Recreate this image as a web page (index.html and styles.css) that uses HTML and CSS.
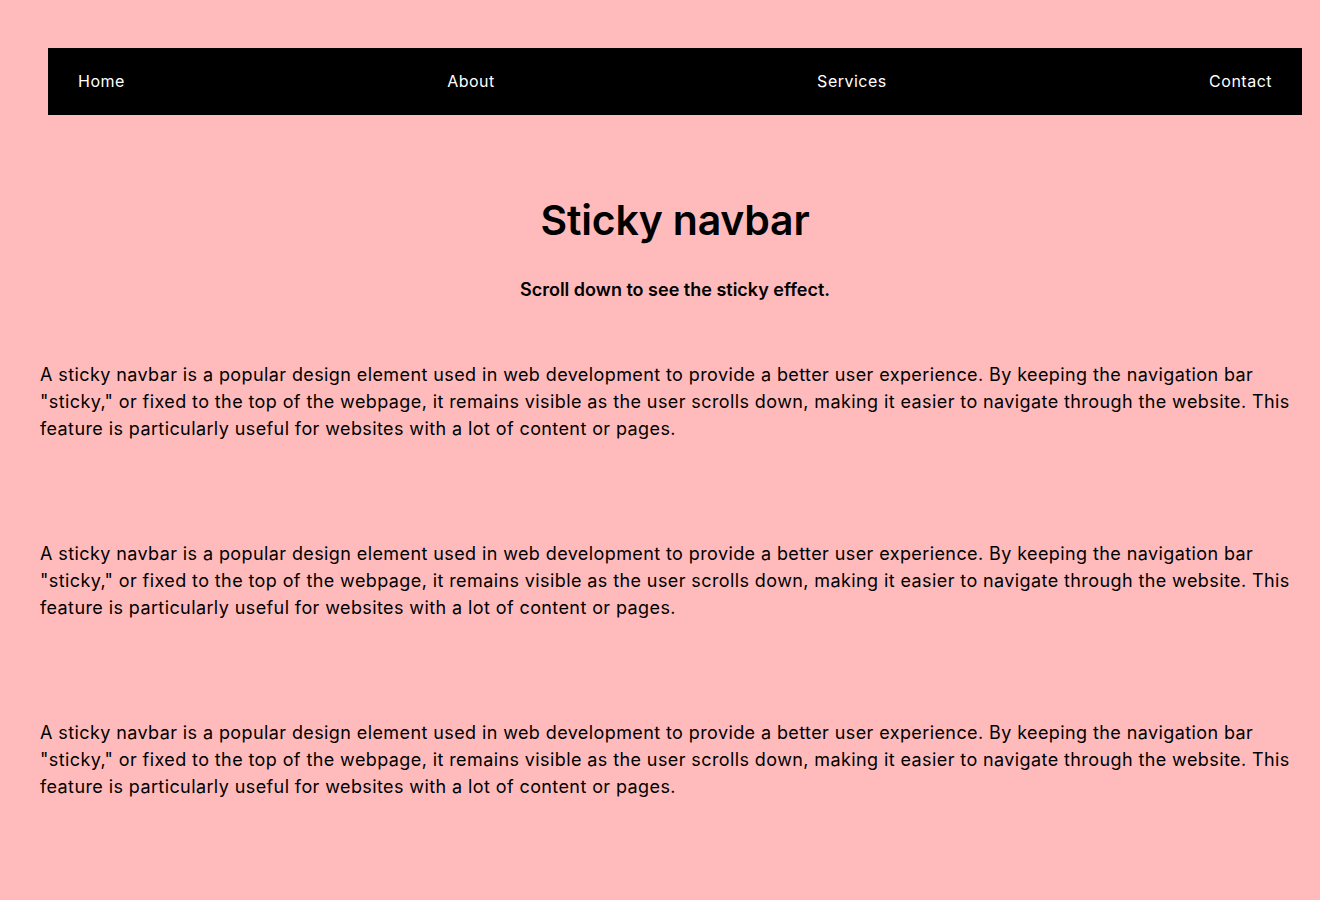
FILE: index.html
```html
<!DOCTYPE html>
<html lang="en">
<head>
<meta charset="utf-8">
<title>Sticky navbar</title>
<link rel="stylesheet" href="styles.css">
</head>
<body>
<nav class="navbar">
  <a class="nav-link" href="#">Home</a>
  <a class="nav-link" href="#">About</a>
  <a class="nav-link" href="#">Services</a>
  <a class="nav-link" href="#">Contact</a>
</nav>
<main class="content">
  <h1 class="title">Sticky navbar</h1>
  <p class="subtitle">Scroll down to see the sticky effect.</p>
  <p class="text">A sticky navbar is a popular design element used in web development to provide a better user experience. By keeping the navigation bar "sticky," or fixed to the top of the webpage, it remains visible as the user scrolls down, making it easier to navigate through the website. This feature is particularly useful for websites with a lot of content or pages.</p>
  <p class="text">A sticky navbar is a popular design element used in web development to provide a better user experience. By keeping the navigation bar "sticky," or fixed to the top of the webpage, it remains visible as the user scrolls down, making it easier to navigate through the website. This feature is particularly useful for websites with a lot of content or pages.</p>
  <p class="text">A sticky navbar is a popular design element used in web development to provide a better user experience. By keeping the navigation bar "sticky," or fixed to the top of the webpage, it remains visible as the user scrolls down, making it easier to navigate through the website. This feature is particularly useful for websites with a lot of content or pages.</p>
</main>
</body>
</html>
```
FILE: styles.css
```css
* { box-sizing: border-box; }
html, body { margin: 0; padding: 0; }
body {
  background: #ffbbbb;
  color: #000;
  font-family: "Inter", "Open Sans", sans-serif;
  padding-top: 48px;
}
.navbar {
  position: sticky;
  top: 0;
  margin-left: 48px;
  width: 1254px;
  height: 67px;
  background: #000;
  padding: 0 30px 2px;
  display: flex;
  align-items: center;
  justify-content: space-between;
}
.nav-link {
  color: #fff;
  text-decoration: none;
  font-size: 16px;
  letter-spacing: 0.5px;
}
.content {
  padding: 0 10px 0 40px;
}
.title {
  margin: 81px 0 0;
  text-align: center;
  font-size: 41px;
  font-weight: 600;
  line-height: 49px;
  letter-spacing: -0.2px;
}
.subtitle {
  margin: 31px 0 0;
  text-align: center;
  font-size: 18px;
  font-weight: 600;
  line-height: 27px;
}
.text {
  margin: 58px 0 0;
  font-size: 18px;
  line-height: 27px;
  letter-spacing: 0.4px;
}
.text + .text { margin-top: 98px; }
```
